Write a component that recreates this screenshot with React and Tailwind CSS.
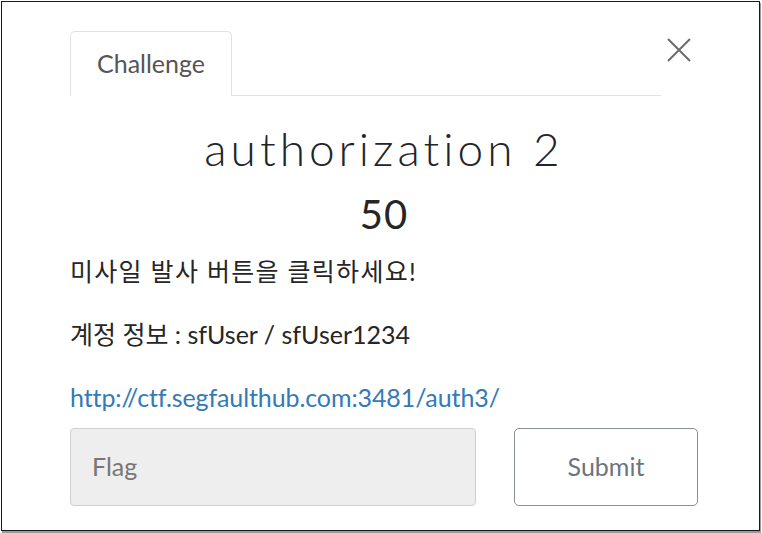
import React from 'react';

export default function App() {
  return (
    <div className="w-[762px] h-[533px] bg-white" style={{ fontFamily: 'Lato, "Noto Sans CJK KR", sans-serif' }}>
      <div className="ml-px mt-px w-[759px] h-[530px] border border-[#1a1a1a] shadow-[1px_2px_0_#9a9a9a] bg-white">
        {/* tabs + close */}
        <div className="flex items-start pt-[29px] pl-[68px]">
          <div className="w-[591px] h-[65px] border-b border-[#dee2e6] flex">
            <div className="w-[162px] h-[65px] border border-b-0 border-[#dee2e6] rounded-t-[5px] bg-white flex items-center justify-center text-[25px] text-[#555]">
              Challenge
            </div>
          </div>
          <button className="ml-[5px] mt-[6px] w-[26px] h-[26px] flex items-center justify-center text-[#6c6c6c]">
            <svg width="26" height="26" viewBox="0 0 26 26" fill="none" stroke="currentColor" strokeWidth="2">
              <path d="M2 2 L24 24 M24 2 L2 24" />
            </svg>
          </button>
        </div>

        <div className="pl-[68px] w-[696px]">
          <h1 className="text-center text-[46px] leading-[52px] mt-[27px] text-[#212529] font-light tracking-[4px]">authorization 2</h1>
          <div className="text-center text-[40px] leading-[44px] mt-[17px] text-[#262626] tracking-[1px]">50</div>
          <p className="text-[25px] leading-[28px] mt-[21px] text-[#262626] tracking-[1.3px]">미사일 발사 버튼을 클릭하세요!</p>
          <p className="text-[25px] leading-[28px] mt-[35px] text-[#262626]">계정 정보 : sfUser / sfUser1234</p>
          <a className="block text-[25px] leading-[28px] mt-[35px] text-[#337ab7] tracking-[-0.1px]" href="#">http://ctf.segfaulthub.com:3481/auth3/</a>
          <div className="flex mt-[17px] gap-[38px]">
            <div className="w-[406px] h-[78px] bg-[#eeeeee] border border-[#d0d0d0] rounded-[4px] flex items-center pl-[21px] text-[25px] text-[#777]">
              Flag
            </div>
            <button className="w-[184px] h-[78px] bg-white border border-[#8a8f94] rounded-[5px] text-[25px] text-[#6c757d]">
              Submit
            </button>
          </div>
        </div>
      </div>
    </div>
  );
}
